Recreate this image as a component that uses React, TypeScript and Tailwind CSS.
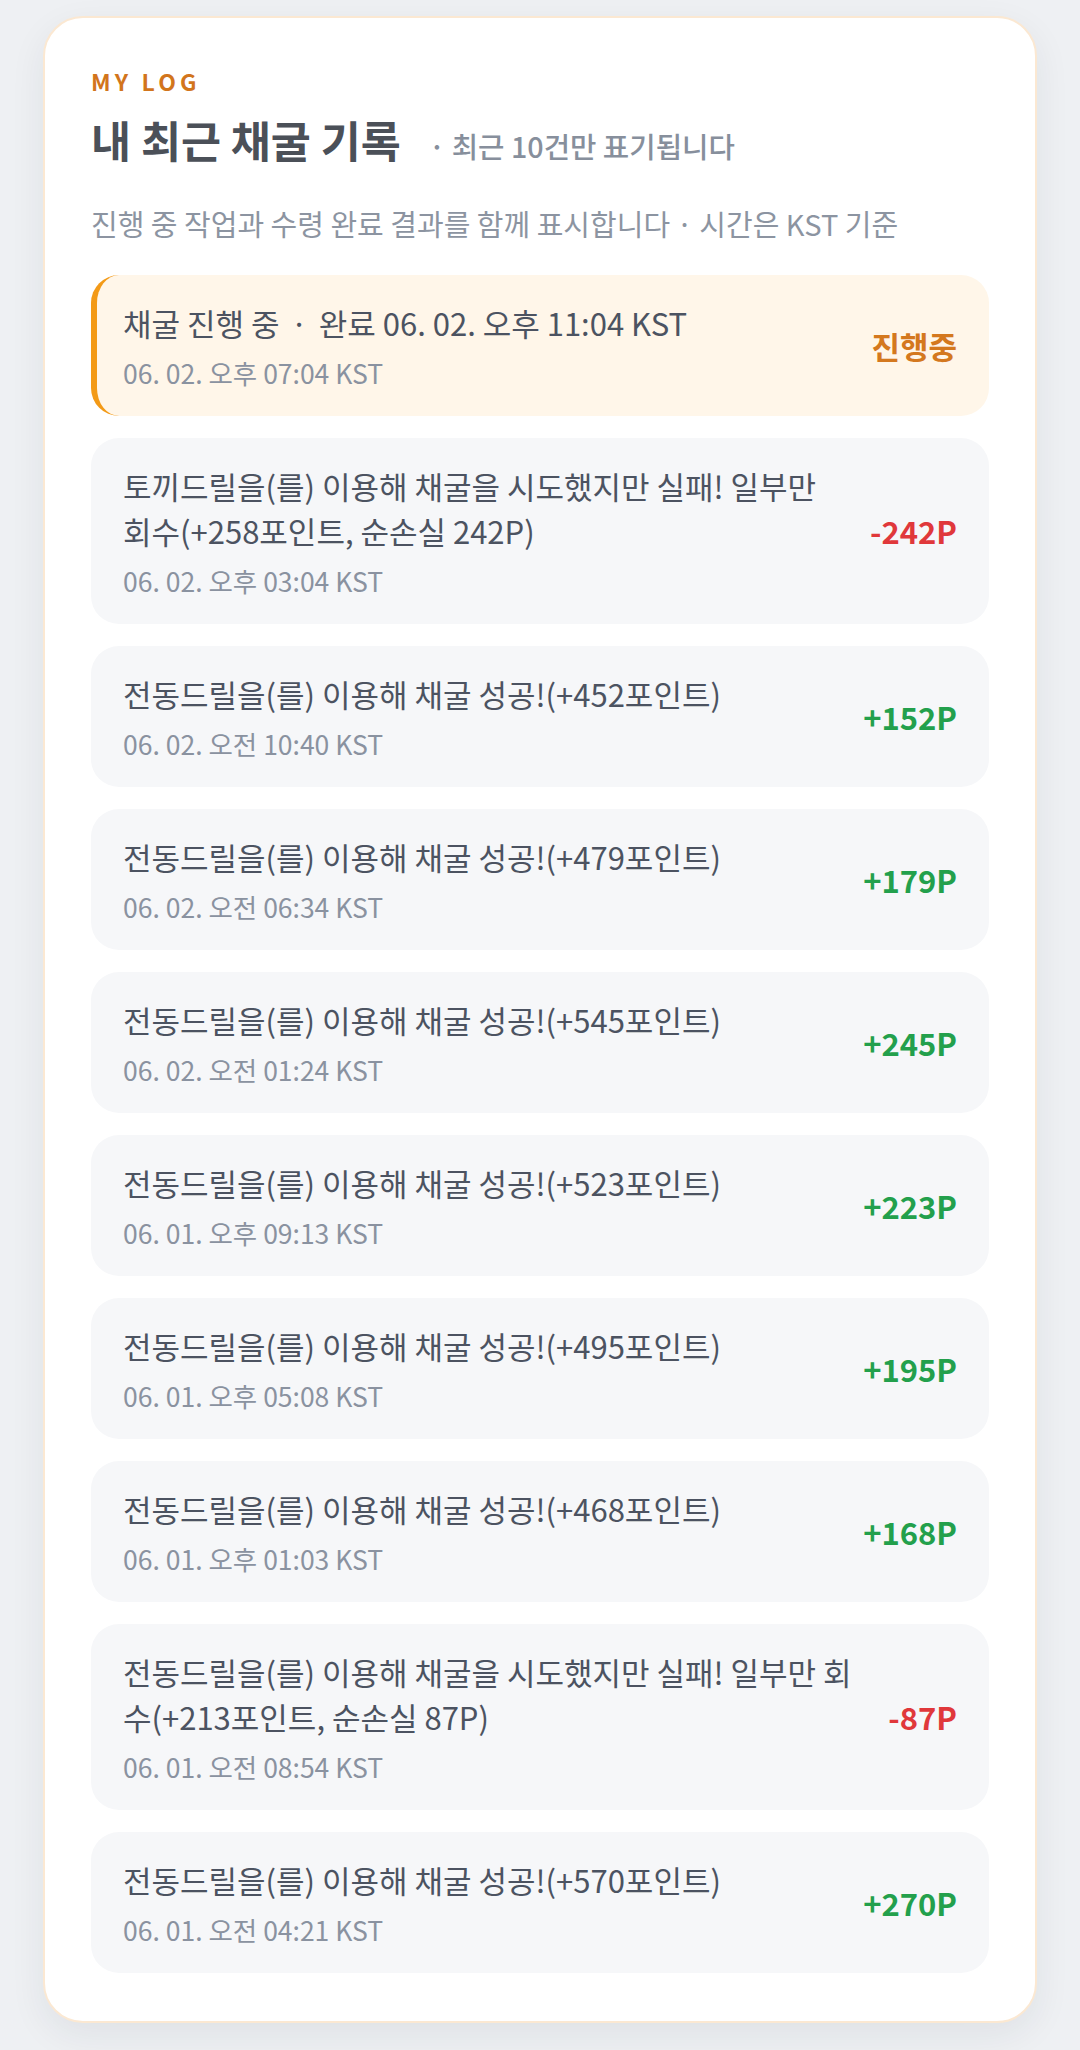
import React from 'react';

type LogItem = {
  text: React.ReactNode;
  time: string;
  amount: string;
  kind: 'running' | 'win' | 'loss';
};

const logs: LogItem[] = [
  {
    text: (
      <>
        채굴 진행 중 <span className="mx-1">·</span> 완료 06. 02. 오후 11:04 KST
      </>
    ),
    time: '06. 02. 오후 07:04 KST',
    amount: '진행중',
    kind: 'running',
  },
  { text: '토끼드릴을(를) 이용해 채굴을 시도했지만 실패! 일부만 회수(+258포인트, 순손실 242P)', time: '06. 02. 오후 03:04 KST', amount: '-242P', kind: 'loss' },
  { text: '전동드릴을(를) 이용해 채굴 성공!(+452포인트)', time: '06. 02. 오전 10:40 KST', amount: '+152P', kind: 'win' },
  { text: '전동드릴을(를) 이용해 채굴 성공!(+479포인트)', time: '06. 02. 오전 06:34 KST', amount: '+179P', kind: 'win' },
  { text: '전동드릴을(를) 이용해 채굴 성공!(+545포인트)', time: '06. 02. 오전 01:24 KST', amount: '+245P', kind: 'win' },
  { text: '전동드릴을(를) 이용해 채굴 성공!(+523포인트)', time: '06. 01. 오후 09:13 KST', amount: '+223P', kind: 'win' },
  { text: '전동드릴을(를) 이용해 채굴 성공!(+495포인트)', time: '06. 01. 오후 05:08 KST', amount: '+195P', kind: 'win' },
  { text: '전동드릴을(를) 이용해 채굴 성공!(+468포인트)', time: '06. 01. 오후 01:03 KST', amount: '+168P', kind: 'win' },
  { text: '전동드릴을(를) 이용해 채굴을 시도했지만 실패! 일부만 회수(+213포인트, 순손실 87P)', time: '06. 01. 오전 08:54 KST', amount: '-87P', kind: 'loss' },
  { text: '전동드릴을(를) 이용해 채굴 성공!(+570포인트)', time: '06. 01. 오전 04:21 KST', amount: '+270P', kind: 'win' },
];

const amountColor = {
  running: 'text-[#d4781e]',
  win: 'text-[#23a04c]',
  loss: 'text-[#e0383b]',
};

const LogRow = ({ item }: { item: LogItem }) => {
  const running = item.kind === 'running';
  return (
    <li
      className={
        running
          ? 'flex items-center gap-7 rounded-[28px] border-l-[6px] border-[#f39a17] bg-[#fff6e9] pl-[26px] pr-8 pt-[25px] pb-[25px]'
          : 'flex items-center gap-7 rounded-[28px] bg-[#f6f7f9] pl-8 pr-8 pt-[25px] pb-[25px]'
      }
    >
      <div className="min-w-0 flex-1">
        <p className="text-[31px] leading-[45px] text-[#4c5361]">{item.text}</p>
        <p className="mt-[10px] text-[26.5px] leading-[36px] text-[#8a92a0]">{item.time}</p>
      </div>
      <span className={`shrink-0 text-[31px] font-bold leading-[40px] ${amountColor[item.kind]}`}>
        {item.amount}
      </span>
    </li>
  );
};

export default function App() {
  return (
    <div
      className="min-h-screen bg-[#eef0f3] pt-4 pb-6"
      style={{ fontFamily: '"Noto Sans CJK KR", "Noto Sans", sans-serif' }}
    >
      <section className="mx-auto w-[994px] rounded-[40px] border-2 border-[#fbe8d2] bg-white px-[46px] pt-[47px] pb-12 shadow-[0_12px_36px_rgba(30,41,59,0.07)]">
        <p className="text-[23px] font-bold leading-[32px] tracking-[0.18em] text-[#d2751c]">MY LOG</p>

        <div className="mt-[17px] flex items-baseline">
          <h2 className="text-[43.5px] font-bold leading-[52px] text-[#4b5058]">내 최근 채굴 기록</h2>
          <span className="ml-7 text-[28.7px] font-medium text-[#878f9c]">· 최근 10건만 표기됩니다</span>
        </div>

        <p className="mt-9 text-[29px] leading-[40px] text-[#8c94a1]">
          진행 중 작업과 수령 완료 결과를 함께 표시합니다 · 시간은 KST 기준
        </p>

        <ul className="mt-8 flex flex-col gap-[22px]">
          {logs.map((item, i) => (
            <LogRow key={i} item={item} />
          ))}
        </ul>
      </section>
    </div>
  );
}
